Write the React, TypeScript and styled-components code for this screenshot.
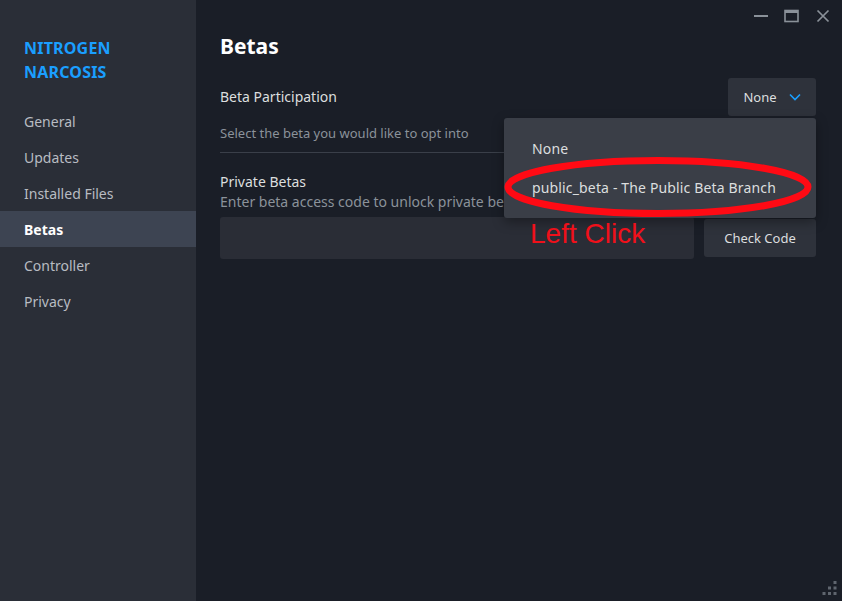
import React from "react";
import styled, { createGlobalStyle } from "styled-components";

const Global = createGlobalStyle`
  html, body { margin: 0; padding: 0; background: #1a1e27; }
  body { font-family: "Noto Sans", "Open Sans", sans-serif; overflow: hidden; }
  * { box-sizing: border-box; }
`;

const Window = styled.div`
  display: flex;
  width: 842px;
  height: 601px;
  background: #1a1e27;
  position: relative;
`;

const Sidebar = styled.nav`
  width: 196px;
  flex: none;
  background: #2a2e37;
  padding-top: 36px;
  display: flex;
  flex-direction: column;
`;

const GameTitle = styled.div`
  padding: 0 24px;
  color: #1a9fff;
  font-weight: 700;
  font-size: 16px;
  line-height: 24px;
  letter-spacing: 0.2px;
  margin-bottom: 19px;
`;

const NavItem = styled.div<{ $active?: boolean }>`
  height: 36px;
  display: flex;
  align-items: center;
  padding: 0 24px;
  font-size: 14px;
  color: ${(p) => (p.$active ? "#ffffff" : "#b8bcc2")};
  font-weight: ${(p) => (p.$active ? 700 : 400)};
  background: ${(p) => (p.$active ? "#3d4452" : "transparent")};
`;

const Main = styled.main`
  flex: 1;
  display: flex;
  flex-direction: column;
  position: relative;
`;

const TitleBar = styled.div`
  height: 32px;
  display: flex;
  justify-content: flex-end;
  align-items: center;
  padding-right: 4px;
`;

const WinButton = styled.div`
  width: 31px;
  height: 32px;
  display: flex;
  align-items: center;
  justify-content: center;
  color: #8a9199;
`;

const Content = styled.div`
  padding: 0 26px 0 24px;
  display: flex;
  flex-direction: column;
`;

const Heading = styled.h1`
  margin: 0;
  font-size: 21px;
  line-height: 28px;
  font-weight: 700;
  color: #ffffff;
`;

const Row = styled.div`
  margin-top: 18px;
  height: 38px;
  display: flex;
  align-items: center;
  justify-content: space-between;
  position: relative;
`;

const Label = styled.div`
  font-size: 14px;
  line-height: 20px;
  color: #dcdedf;
`;

const Description = styled.div<{ $top?: number; $size?: number }>`
  margin-top: ${(p) => p.$top ?? 0}px;
  font-size: ${(p) => p.$size ?? 13}px;
  line-height: 20px;
  color: #8b929a;
  white-space: nowrap;
  overflow: hidden;
`;

const Divider = styled.div`
  margin-top: 9px;
  height: 1px;
  background: #3a3f49;
`;

const SelectButton = styled.div`
  width: 88px;
  height: 38px;
  background: #2e323b;
  border-radius: 3px;
  display: flex;
  align-items: center;
  justify-content: center;
  gap: 12px;
  color: #dcdedf;
  font-size: 13px;
`;

const SectionLabel = styled(Label)`
  margin-top: 19px;
`;

const CodeRow = styled.div`
  margin-top: 5px;
  display: flex;
  align-items: center;
  gap: 10px;
`;

const CodeInput = styled.div`
  flex: 1;
  height: 42px;
  background: #2a2d36;
  border-radius: 3px;
`;

const CheckButton = styled.div`
  width: 112px;
  height: 38px;
  background: #2e323b;
  border-radius: 3px;
  display: flex;
  align-items: center;
  justify-content: center;
  color: #dcdedf;
  font-size: 13px;
`;

const Menu = styled.div`
  position: absolute;
  left: 308px;
  top: 118px;
  width: 312px;
  padding: 11px 0 11px;
  background: #3a3e47;
  border-radius: 3px;
  box-shadow: 0 4px 12px rgba(0, 0, 0, 0.35);
  z-index: 2;
`;

const MenuItem = styled.div`
  height: 39px;
  display: flex;
  align-items: center;
  padding-left: 28px;
  font-size: 14px;
  letter-spacing: 0.15px;
  color: #dcdedf;
`;

const Ellipse = styled.svg`
  position: absolute;
  left: 304px;
  top: 150px;
  z-index: 3;
  pointer-events: none;
`;

const Annotation = styled.div`
  position: absolute;
  left: 334px;
  top: 217px;
  font-family: "Liberation Sans", Arial, sans-serif;
  font-size: 28px;
  line-height: 34px;
  color: #f0101a;
  z-index: 3;
`;

const Grip = styled.svg`
  position: absolute;
  right: 4px;
  bottom: 5px;
`;

export default function App() {
  return (
    <>
      <Global />
      <Window>
        <Sidebar>
          <GameTitle>
            NITROGEN
            <br />
            NARCOSIS
          </GameTitle>
          <NavItem>General</NavItem>
          <NavItem>Updates</NavItem>
          <NavItem>Installed Files</NavItem>
          <NavItem $active>Betas</NavItem>
          <NavItem>Controller</NavItem>
          <NavItem>Privacy</NavItem>
        </Sidebar>
        <Main>
          <TitleBar>
            <WinButton>
              <svg width="14" height="14" viewBox="0 0 14 14">
                <rect x="0" y="6" width="14" height="2" fill="currentColor" />
              </svg>
            </WinButton>
            <WinButton>
              <svg width="15" height="14" viewBox="0 0 15 14">
                <rect x="1" y="1.5" width="13" height="11" fill="none" stroke="currentColor" strokeWidth="1.6" />
                <rect x="1" y="1" width="13" height="3" fill="currentColor" />
              </svg>
            </WinButton>
            <WinButton>
              <svg width="14" height="14" viewBox="0 0 14 14">
                <path d="M1.5 1.5 L12.5 12.5 M12.5 1.5 L1.5 12.5" stroke="currentColor" strokeWidth="1.7" />
              </svg>
            </WinButton>
          </TitleBar>
          <Content>
            <Heading>Betas</Heading>
            <Row>
              <Label>Beta Participation</Label>
              <SelectButton>
                None
                <svg width="12" height="8" viewBox="0 0 12 8">
                  <path d="M1 1.5 L6 6.5 L11 1.5" fill="none" stroke="#1a9fff" strokeWidth="1.6" />
                </svg>
              </SelectButton>
            </Row>
            <Description $top={7}>Select the beta you would like to opt into</Description>
            <Divider />
            <SectionLabel>Private Betas</SectionLabel>
            <Description $size={14}>Enter beta access code to unlock private betas</Description>
            <CodeRow>
              <CodeInput />
              <CheckButton>Check Code</CheckButton>
            </CodeRow>
          </Content>
          <Menu>
            <MenuItem>None</MenuItem>
            <MenuItem>public_beta - The Public Beta Branch</MenuItem>
          </Menu>
          <Ellipse width="316" height="74" viewBox="0 0 316 74">
            <ellipse cx="158" cy="37" rx="150" ry="26.5" fill="none" stroke="#ff0a14" strokeWidth="7" />
          </Ellipse>
          <Annotation>Left Click</Annotation>
          <Grip width="16" height="16" viewBox="0 0 16 16">
            <rect x="11.5" y="1" width="3" height="3" fill="#5f656e" />
            <rect x="6" y="6.5" width="3" height="3" fill="#5f656e" />
            <rect x="11.5" y="6.5" width="3" height="3" fill="#5f656e" />
            <rect x="0.5" y="12" width="3" height="3" fill="#5f656e" />
            <rect x="6" y="12" width="3" height="3" fill="#5f656e" />
            <rect x="11.5" y="12" width="3" height="3" fill="#5f656e" />
          </Grip>
        </Main>
      </Window>
    </>
  );
}
